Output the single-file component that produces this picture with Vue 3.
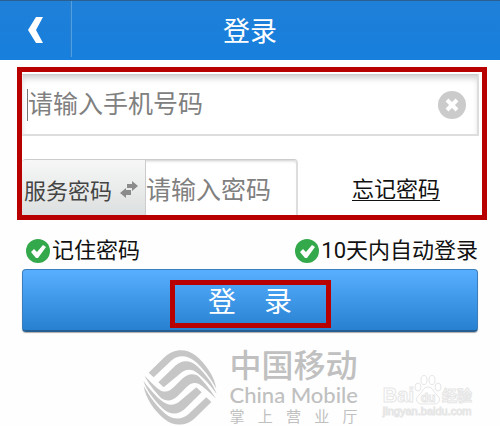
<template>
  <div class="login-page">
    <header class="top-bar">
      <button class="back-btn" type="button" aria-label="返回">
        <svg width="16" height="26" viewBox="0 0 16 26">
          <path d="M8 0H15L8 13L15 26H8L0 13Z" fill="#fff" />
        </svg>
      </button>
      <h1 class="title">登录</h1>
    </header>

    <form class="login-form" @submit.prevent>
      <div class="account-box">
        <div class="phone-field">
          <span class="caret"></span>
          <input v-model="phone" type="tel" placeholder="请输入手机号码" aria-label="手机号码" />
          <button class="clear-btn" type="button" aria-label="清除" @click="phone = ''">
            <svg width="28" height="28" viewBox="0 0 28 28">
              <circle cx="14" cy="14" r="14" fill="#cbcbcb" />
              <path d="M9 9L19 19M19 9L9 19" stroke="#fff" stroke-width="4" />
            </svg>
          </button>
        </div>

        <div class="password-row">
          <div class="password-field">
            <button class="type-btn" type="button">
              服务密码
              <svg width="18" height="17" viewBox="0 0 18 17" fill="#8b8b8b">
                <path d="M7 3H12V0L18 5L12 10V7H7Z" />
                <path d="M11 9H6V7L0 12L6 17V14H11Z" />
              </svg>
            </button>
            <input v-model="password" type="password" placeholder="请输入密码" aria-label="密码" />
          </div>
          <a class="forgot" href="#">忘记密码</a>
        </div>
      </div>

      <div class="options">
        <label v-for="item in options" :key="item.text" class="option">
          <span class="tick">
            <input v-model="item.checked" type="checkbox" />
            <svg width="24" height="24" viewBox="0 0 24 24">
              <circle cx="12" cy="12" r="12" :fill="item.checked ? '#34a94c' : '#cbcbcb'" />
              <path d="M5 13L8 10L11 13L17 6L20 8L12 19H10Z" fill="#fff" />
            </svg>
          </span>
          {{ item.text }}
        </label>
      </div>

      <button class="submit-btn" type="submit">
        <span class="submit-text">登　录</span>
      </button>
    </form>

    <footer class="brand">
      <svg class="brand-logo" width="74" height="75" viewBox="38 29 222 225">
        <g fill="#c6c6c6">
          <path :d="outerBand" />
          <path :d="innerBand" />
          <path :d="outerBand" transform="rotate(180 149 141)" />
          <path :d="innerBand" transform="rotate(180 149 141)" />
          <path
            d="M43 107C62 126 78 143 92 151C106 157 118 153 130 141L155 116C172 99 191 98 206 109C226 130 246 156 257 175C237 156 220 139 206 131C192 125 180 129 168 141L143 166C126 183 107 184 92 173C72 152 52 126 43 107Z"
          />
        </g>
      </svg>
      <div class="brand-text">
        <strong class="brand-cn">中国移动</strong>
        <span class="brand-en">China Mobile</span>
        <span class="brand-sub">
          <span v-for="word in '掌上营业厅'" :key="word">{{ word }}</span>
        </span>
      </div>
    </footer>

    <div class="watermark">
      <div class="mark-name">
        <span>Bai</span>
        <svg width="28" height="30" viewBox="0 0 28 30" fill="#fff" stroke="#e6e6e6">
          <ellipse cx="4" cy="12" rx="3" ry="4" />
          <ellipse cx="10" cy="5" rx="3" ry="4.500" />
          <ellipse cx="18" cy="5" rx="3" ry="4.500" />
          <ellipse cx="24" cy="12" rx="3" ry="4" />
          <path d="M14 12C9 12 9 17 5 20C0 24 3 29 8 29H20C25 29 28 24 23 20C19 17 19 12 14 12Z" />
          <text x="14" y="27" text-anchor="middle">du</text>
        </svg>
        <span class="mark-cn">经验</span>
      </div>
      <div class="mark-url">jingyan.baidu.com</div>
    </div>
  </div>
</template>

<script setup>
import { ref } from 'vue';

const phone = ref('');
const password = ref('');
const options = ref([
  { text: '记住密码', checked: true },
  { text: '10天内自动登录', checked: true },
]);

// 标志上半部分的两条色带，下半部分旋转得到
const outerBand =
  'M55 97L103 50C128 25 168 22 195 45C226 70 252 108 258 145C240 112 216 81 193 62C169 43 143 43 124 60L70 111Z';
const innerBand =
  'M84 126L134 77C154 57 181 59 200 77C225 101 249 131 259 161C240 135 220 113 202 99C184 84 165 86 149 100L100 141Z';
</script>

<style>
body {
  margin: 0;
  background: #fefefe;
}
</style>

<style scoped>
.login-page {
  position: relative;
  font-family: Roboto, "Noto Sans CJK SC", sans-serif;
  color: #111;
  overflow: hidden;
}

button,
input {
  font-family: inherit;
  margin: 0;
  padding: 0;
  border: none;
  background: transparent;
}

.top-bar {
  display: grid;
  grid-template-columns: 72px 1fr 72px;
  height: 60px;
  box-sizing: border-box;
  border-top: 1px solid #2b5f91;
  background: linear-gradient(#1f80d8, #177fdd);
}

.back-btn {
  display: flex;
  align-items: center;
  justify-content: center;
  height: 56px;
  padding-top: 2px;
  border-right: 1px solid #4f9fe3;
  box-shadow: inset -1px 0 #2c7fca;
}

.title {
  margin: 0;
  color: #fff;
  font-size: 27px;
  font-weight: 400;
  line-height: 62px;
  text-align: center;
}

.login-form {
  padding: 7px 22px 0;
}

/* 红色标注框 */
.account-box {
  height: 143px;
  margin: 0 -9px 0 -5px;
  border: 5px solid #b90000;
  background: #fff;
  overflow: hidden;
}

.phone-field {
  display: flex;
  align-items: center;
  height: 62px;
  box-sizing: border-box;
  margin: 2px 3px 23px 0;
  padding: 0 11px 0 4px;
  border: 1px solid #ccc;
  border-left-color: #eee;
  border-right: 2px solid #ddd;
  border-bottom: 2px solid #ddd;
  box-shadow: inset 0 5px 6px -2px #ccc;
}

.caret {
  width: 1px;
  height: 32px;
  background: #777;
}

input {
  flex: 1;
  min-width: 0;
  height: 40px;
  font-size: 25px;
  outline: none;
}

input::placeholder {
  color: #808080;
  opacity: 1;
}

.clear-btn {
  display: flex;
}

.password-row {
  display: flex;
  height: 64px;
}

.password-field {
  display: flex;
  flex: 0 0 60%;
  box-sizing: border-box;
  border: 1px solid #ccc;
  border-left: none;
  border-right: 2px solid #ddd;
  border-radius: 4px;
  box-shadow: inset 0 3px 3px -2px #ccc;
  overflow: hidden;
}

.type-btn {
  display: flex;
  align-items: center;
  gap: 8px;
  padding: 0 7px 4px 2px;
  border-right: 1px solid #ccc;
  background: linear-gradient(#f7f7f7, #dcdfdf 56px);
  color: #444;
  font-size: 22px;
  white-space: nowrap;
}

.password-field input {
  height: 60px;
}

.forgot {
  margin: 0 42px 0 auto;
  color: #111;
  font-size: 22px;
  line-height: 62px;
  text-decoration-thickness: 1px;
  text-underline-offset: 3px;
}

.options {
  display: flex;
  justify-content: space-between;
  padding: 15px 0 0 4px;
}

.option {
  display: flex;
  align-items: center;
  gap: 2px;
  height: 32px;
  font-size: 22px;
  line-height: 28px;
}

.tick {
  display: grid;
}

.tick input,
.tick svg {
  grid-area: 1 / 1;
  width: 24px;
  height: 24px;
}

.tick input {
  appearance: none;
}

.submit-btn {
  display: flex;
  align-items: center;
  justify-content: center;
  width: 100%;
  height: 63px;
  margin-top: 2px;
  border: 1px solid #397fbd;
  border-bottom: 2px solid #275e91;
  border-radius: 4px;
  background: linear-gradient(#58afff, #2780d0);
  box-shadow: 0 1px 1px #aaa;
}

.submit-text {
  box-sizing: border-box;
  width: 161px;
  height: 48px;
  margin-top: 8px;
  border: 5px solid #b90000;
  color: #fff;
  font-size: 28px;
  line-height: 36px;
  text-align: center;
}

.brand {
  display: flex;
  justify-content: center;
  gap: 13px;
  padding: 18px 0 0;
}

.brand-text {
  display: flex;
  flex-direction: column;
  width: 128px;
  color: #c0c0c0;
}

.brand-cn {
  font-size: 32px;
  font-weight: 500;
  line-height: 32px;
}

.brand-en {
  font-family: Lato, sans-serif;
  font-size: 22px;
  font-weight: 500;
  line-height: 26px;
  white-space: nowrap;
}

.brand-sub {
  display: flex;
  justify-content: space-between;
  font-size: 15px;
  line-height: 18px;
}

.watermark {
  position: absolute;
  right: 28px;
  bottom: 9px;
  color: #fff;
  -webkit-text-stroke: 1px #e6e6e6;
}

.mark-name {
  display: flex;
  align-items: flex-end;
  font-family: "Liberation Sans", sans-serif;
  font-size: 20px;
  font-weight: 700;
  line-height: 20px;
}

.mark-name text {
  font-size: 12px;
}

.mark-cn {
  font-family: "Noto Sans CJK SC", sans-serif;
  font-size: 15px;
}

.mark-url {
  font-family: "Liberation Sans", sans-serif;
  font-size: 11px;
  line-height: 12px;
}
</style>
